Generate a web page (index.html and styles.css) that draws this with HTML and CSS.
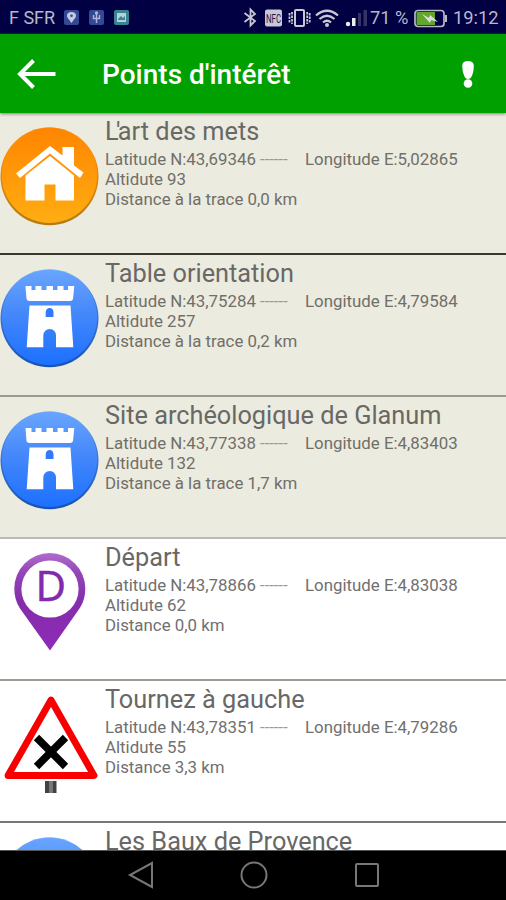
FILE: index.html
```html
<!DOCTYPE html>
<html lang="fr">
<head>
<meta charset="utf-8">
<title>Points d'intérêt</title>
<link rel="stylesheet" href="styles.css">
</head>
<body>
<svg class="defs" width="0" height="0" aria-hidden="true">
  <defs>
    <linearGradient id="orange" x2="0" y2="1"><stop offset="0" stop-color="#ff8500"/><stop offset="1" stop-color="#ffad12"/></linearGradient>
    <linearGradient id="blue" x2="0" y2="1"><stop offset="0" stop-color="#69a5ff"/><stop offset=".45" stop-color="#4588fa"/><stop offset="1" stop-color="#1c70ff"/></linearGradient>
    <linearGradient id="rimOrange" x2="0" y2="1"><stop offset="0" stop-color="#ffb45d"/><stop offset=".3" stop-color="#f08b0a"/><stop offset="1" stop-color="#b47b10"/></linearGradient>
    <linearGradient id="rimBlue" x2="0" y2="1"><stop offset="0" stop-color="#80bbfa"/><stop offset=".3" stop-color="#477fda"/><stop offset="1" stop-color="#1753b5"/></linearGradient>
    <linearGradient id="purple" x2="0" y2="1"><stop offset="0" stop-color="#b06bcd"/><stop offset=".2" stop-color="#9446b5"/><stop offset=".5" stop-color="#852dab"/><stop offset="1" stop-color="#8d2bb7"/></linearGradient>
    <symbol id="castle" viewBox="0 0 100 100">
      <circle cx="49.5" cy="49.3" r="49" fill="url(#rimBlue)"/>
      <circle cx="49.5" cy="48.3" r="47.6" fill="url(#blue)"/>
      <path fill="#fff" d="M25.5 17H31.5V21H35.5V17H41.5V21H46.5V17H53V21H57.5V17H63.5V21H68V17H74.3L73 30Q72.5 32 70 32H29.5Q27 32 26.5 30ZM29.5 36.5H70.5L73.3 78.3H56V66.5Q55.5 60 49.8 60Q44 60 43.3 66.5V78.3H26.7Z"/>
      <path fill="#3279fc" d="M45.7 48V43Q46.3 39 49.7 39Q53 39 53.5 43V48Z"/>
    </symbol>
  </defs>
</svg>
<main class="phone">
  <div class="status">
    <span class="carrier">F SFR</span>
    <svg class="notes" width="70" height="18" viewBox="0 0 70 18">
      <rect x="1" y="1" width="15" height="15" rx="2" fill="#354894"/><path fill="#c4c8e0" d="M8.5 14C6 10 4 9 4 6.5A4.5 3.5 0 0 1 13 6.5C13 9 11 10 8.5 14Z"/><circle cx="8.5" cy="6.8" r="1.3" fill="#354894"/>
      <rect x="26" y="1" width="15" height="15" rx="2" fill="#354894"/><path fill="none" stroke="#aeb5d8" stroke-width="1.4" d="M33.5 4V14M30.5 6V9.5H36.5V6"/><circle cx="33.5" cy="4" r="1.7" fill="#aeb5d8"/>
      <rect x="51" y="1" width="15" height="15" rx="2" fill="#398594"/><path fill="#b6d0d7" d="M54 4H63V13H54Z"/><path fill="#398594" d="M55 10 58 7 60 9 62 7V11H55Z"/>
    </svg>
    <svg class="signals" width="126" height="22" viewBox="0 0 126 22" fill="none" stroke="#c8c8d5" stroke-width="1.8">
      <path d="M1.5 6 12 14 7.5 18.5V2.5L12 7 1.5 15"/>
      <rect x="22" y="2.5" width="17" height="17" rx="2" fill="#c8c8d5" stroke="none"/>
      <text x="23" y="15.5" class="nfc" textLength="15" lengthAdjust="spacingAndGlyphs">NFC</text>
      <rect x="52" y="3" width="9" height="16" rx="1" stroke-width="2"/><path d="M49 5V17M64.2 5V17M46.5 6V16M66.7 6V16" stroke-dasharray="2.5 1"/>
      <path stroke-width="2.2" d="M73 8.5Q84 -1 95 8.5M76.5 12Q84 5.5 91.5 12M80 15.5Q84 12 88 15.5"/><circle cx="84" cy="18" r="2" fill="#c8c8d5" stroke="none"/>
      <g stroke="none"><circle cx="105" cy="17" r="2.2" fill="#eee"/><path fill="#eee" d="M109 11H112.5V19H109Z"/><path fill="#353365" d="M115 6H118V19H115ZM120.5 3H124V19H120.5Z"/></g>
    </svg>
    <span class="percent">71 %</span>
    <svg class="battery" width="34" height="20" viewBox="0 0 34 20"><rect x="1" y="2.5" width="29" height="16" rx="3" fill="none" stroke="#b7b7c7" stroke-width="1.7"/><path fill="#b7b7c7" d="M31 7H33V14H31Z"/><path fill="#62a72b" d="M2.5 4H21V17H2.5Z"/><path fill="#dedee2" d="M8 6 15 10 16 7 24 14 17 12 16 15Z"/></svg>
    <span class="clock">19:12</span>
  </div>
  <header class="bar">
    <svg class="back" width="42" height="34" viewBox="0 0 42 34" fill="none" stroke="#fff" stroke-width="4"><path d="M39.5 17H4M17.5 3.5 4 17 17.5 30.5"/></svg>
    <h1 class="heading">Points d'intérêt</h1>
    <svg class="alert" width="14" height="30" viewBox="0 0 14 30" fill="#fff"><path d="M1.2 6Q1.2 1 7 1T12.8 6Q12.7 13 10.3 17Q9.5 19 7 19T3.7 17Q1.2 12 1.2 6Z"/><circle cx="7" cy="23.5" r="4.3"/></svg>
  </header>
  <div class="list">
    <article class="item shaded first">
      <svg class="icon" viewBox="0 0 100 100"><circle cx="49.5" cy="49.3" r="49" fill="url(#rimOrange)"/><circle cx="49.5" cy="48.2" r="47.7" fill="url(#orange)"/><path fill="#fff" d="M50 19 62.5 28.5V20H74V38.5L83.5 45.5 80 51 50 26.5 20 51 16 46.5Z"/><path fill="#fff" d="M50 29 74 48.5V73.5H55.5V57.5H44.5V73.5H25.5V48.5Z"/></svg>
      <div class="text"><h2 class="name"><span class="kern">L'</span>art des mets</h2><div class="coords"><span class="lat">Latitude N:43,69346 <i class="dashes">------</i></span><span>Longitude E:5,02865</span></div><div>Altidute 93</div><div>Distance à la trace 0,0 km</div></div>
    </article>
    <article class="item shaded soft">
      <svg class="icon"><use href="#castle"/></svg>
      <div class="text"><h2 class="name">Table orientation</h2><div class="coords"><span class="lat">Latitude N:43,75284 <i class="dashes">------</i></span><span>Longitude E:4,79584</span></div><div>Altidute 257</div><div>Distance à la trace 0,2 km</div></div>
    </article>
    <article class="item shaded pale">
      <svg class="icon"><use href="#castle"/></svg>
      <div class="text"><h2 class="name">Site archéologique de Glanum</h2><div class="coords"><span class="lat">Latitude N:43,77338 <i class="dashes">------</i></span><span>Longitude E:4,83403</span></div><div>Altidute 132</div><div>Distance à la trace 1,7 km</div></div>
    </article>
    <article class="item soft">
      <svg class="icon" viewBox="0 0 100 100"><path fill="url(#purple)" d="M50 97.5 20 55.5Q14.3 47 14.3 35.5A35.5 35.5 0 0 1 85.3 35.5Q85.3 47 79.5 55.5Z"/><circle cx="50" cy="36" r="28.6" fill="#fff"/><text x="50.7" y="47.7" class="letter" text-anchor="middle">D</text></svg>
      <div class="text"><h2 class="name">Départ</h2><div class="coords"><span class="lat">Latitude N:43,78866 <i class="dashes">------</i></span><span>Longitude E:4,83038</span></div><div>Altidute 62</div><div>Distance 0,0 km</div></div>
    </article>
    <article class="item">
      <svg class="icon" viewBox="0 0 100 100"><path fill="#fff" stroke="#f80000" stroke-width="6.8" stroke-linejoin="round" d="M51 5 94 80.5H8Z"/><path stroke="#000" stroke-width="7.5" d="M36.5 42.5 65.5 71.5M65.5 42.5 36.5 71.5"/><path fill="#424242" d="M45 86H56.5V98H45Z"/><path fill="#777" d="M49 86H53V98H49Z"/></svg>
      <div class="text"><h2 class="name">Tournez à gauche</h2><div class="coords"><span class="lat">Latitude N:43,78351 <i class="dashes">------</i></span><span>Longitude E:4,79286</span></div><div>Altidute 55</div><div>Distance 3,3 km</div></div>
    </article>
    <article class="item">
      <svg class="icon"><use href="#castle"/></svg>
      <div class="text"><h2 class="name">Les Baux de Provence</h2></div>
    </article>
  </div>
  <nav class="nav">
    <svg width="26" height="28" viewBox="0 0 26 28"><path d="M25 2V26L3 14Z"/></svg>
    <svg width="28" height="28" viewBox="0 0 28 28"><circle cx="14" cy="14" r="12.5"/></svg>
    <svg width="26" height="28" viewBox="0 0 26 28"><rect x="1" y="3" width="22" height="22" rx="1"/></svg>
  </nav>
</main>
</body>
</html>
```
FILE: styles.css
```css
* { box-sizing: border-box; }
body { margin: 0; background: #000; font-family: Roboto, "Liberation Sans", sans-serif; }
.defs { position: absolute; }
.phone { display: flex; flex-direction: column; width: 506px; height: 900px; overflow: hidden; }
.status { flex: 0 0 34px; display: flex; align-items: center; padding: 2px 7px 0 9px; background: #000042; color: #b8b8ca; font-size: 18px; line-height: 32px; white-space: nowrap; }
.carrier { width: 54px; font-size: 18px; }
.notes { flex: none; }
.signals { flex: none; margin-left: 110px; }
.nfc { font-size: 12px; fill: #17174b; stroke: none; }
.percent { width: 44px; margin-left: 1px; font-size: 18.3px; }
.battery { flex: none; }
.clock { margin-left: 5px; font-size: 18.3px; }
.bar { flex: 0 0 79px; display: flex; align-items: center; padding: 0 31px 0 16px; background: #00a000; color: #fff; z-index: 1; box-shadow: 0 1px 3px #8a7a76; }
.back { flex: none; }
.heading { flex: 1; margin: 3px 0 0 44px; font-size: 28px; font-weight: 500; line-height: 34px; }
.alert { margin-top: 3px; }
.list { flex: 0 0 738px; overflow: hidden; background: #fff; border-bottom: 1px solid #555; }
.item { display: flex; height: 142px; gap: 5px; padding-top: 14px; border-bottom: 2px solid #777; background: #fff; color: #707070; }
.shaded { background: #ecebdf; color: #706f69; }
.first { border-color: #393831; }
.soft { border-color: #9b9a93; }
.pale { border-color: #bcbbb3; }
.icon { flex: none; width: 100px; height: 100px; }
.text { margin-top: -14px; padding-top: 4px; font-size: 16.85px; line-height: 19.8px; white-space: nowrap; }
.name { margin: 0 0 3px; font-size: 25.3px; font-weight: 400; line-height: 30px; color: #686866; }
.kern { letter-spacing: -2.6px; }
.coords { display: flex; }
.lat { width: 200px; }
.dashes { font-style: normal; letter-spacing: -.1px; color: #999; }
.letter { font: 42px "Open Sans", sans-serif; fill: #822aad; stroke: #822aad; stroke-width: .6; }
.nav { flex: 1; display: flex; align-items: center; justify-content: center; gap: 87px; padding: 0 0 1px 1px; background: #000; }
.nav svg { fill: none; stroke: #777; stroke-width: 2; }
```
